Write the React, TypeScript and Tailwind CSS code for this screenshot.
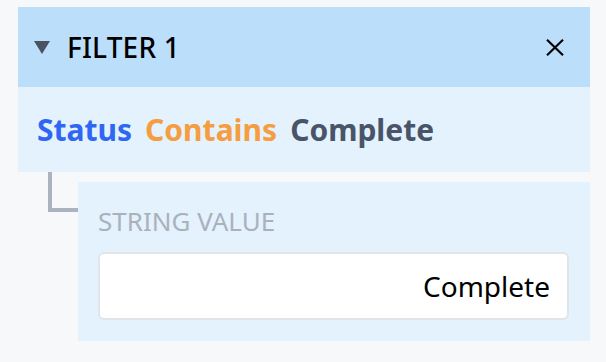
function FilterHeader({ title }: { title: string }) {
  return (
    <header className="flex h-[80px] items-center justify-between bg-[#bbdefb] pl-[16px] pr-[26px]">
      <div className="flex items-center gap-[17px]">
        <svg width="16" height="14" viewBox="0 0 16 14" className="mt-[2px]">
          <path d="M0 0 H16 L8 13 Z" fill="#4b5262" />
        </svg>
        <h2 className="text-[28px] font-medium tracking-[0.2px] text-black">{title}</h2>
      </div>
      <button className="flex items-center text-black">
        <svg width="18" height="17" viewBox="0 0 18 17" fill="none" stroke="currentColor" strokeWidth="2.2">
          <path d="M1 0.8 L17 16.2 M17 0.8 L1 16.2" />
        </svg>
      </button>
    </header>
  );
}

function FilterSummary({
  field,
  op,
  value,
}: {
  field: string;
  op: string;
  value: string;
}) {
  return (
    <div className="flex h-[85px] items-center gap-[13px] bg-[#e3f2fd] px-[19px] text-[30px] font-bold">
      <span className="text-[#2f66f2]">{field}</span>
      <span className="text-[#f59d40]">{op}</span>
      <span className="text-[#4a5468]">{value}</span>
    </div>
  );
}

export default function App() {
  return (
    <div
      className="min-h-[362px] bg-[#f6f8fa] pl-[18px] pr-[16px] pt-[7px]"
      style={{ fontFamily: '"Noto Sans", "Open Sans", sans-serif' }}
    >
      <div className="flex w-[572px] flex-col">
        <FilterHeader title="FILTER 1" />
        <FilterSummary field="Status" op="Contains" value="Complete" />

        <div className="mt-[10px] flex items-start">
          <div className="-mt-[10px] w-[60px] shrink-0">
            <div className="ml-[30px] h-[40px] w-[30px] border-b-4 border-l-4 border-[#abb3bf]" />
          </div>
          <section className="flex-1 bg-[#e3f2fd] pb-[21px] pl-[20px] pr-[21px] pt-[22px]">
            <label className="block text-[26px] leading-[34px] text-[#abb1bb]">STRING VALUE</label>
            <div className="mt-[14px] flex h-[68px] items-center justify-end rounded-[6px] border-2 border-[#e1e4e9] bg-white pr-[17px]">
              <span className="text-[28px] text-black">Complete</span>
            </div>
          </section>
        </div>
      </div>
    </div>
  );
}
